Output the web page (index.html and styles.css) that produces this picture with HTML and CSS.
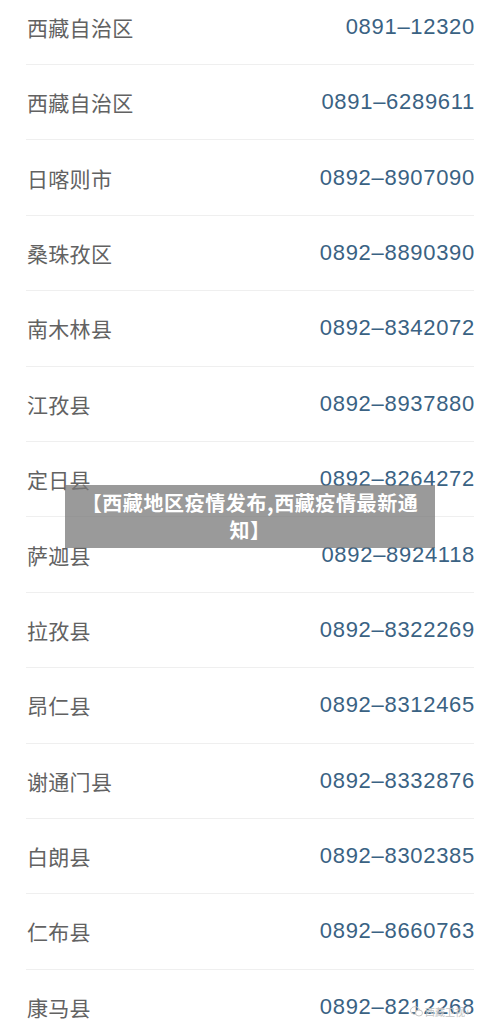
FILE: index.html
```html
<!DOCTYPE html>
<html lang="zh">
<head>
<meta charset="utf-8">
<link rel="stylesheet" href="styles.css">
</head>
<body>
<div class="page">
  <ul class="list">
    <li class="row"><span class="name">西藏自治区</span><span class="tel">0891–12320</span></li>
    <li class="row"><span class="name">西藏自治区</span><span class="tel">0891–6289611</span></li>
    <li class="row"><span class="name">日喀则市</span><span class="tel">0892–8907090</span></li>
    <li class="row"><span class="name">桑珠孜区</span><span class="tel">0892–8890390</span></li>
    <li class="row"><span class="name">南木林县</span><span class="tel">0892–8342072</span></li>
    <li class="row"><span class="name">江孜县</span><span class="tel">0892–8937880</span></li>
    <li class="row"><span class="name">定日县</span><span class="tel">0892–8264272</span></li>
    <li class="row"><span class="name">萨迦县</span><span class="tel">0892–8924118</span></li>
    <li class="row"><span class="name">拉孜县</span><span class="tel">0892–8322269</span></li>
    <li class="row"><span class="name">昂仁县</span><span class="tel">0892–8312465</span></li>
    <li class="row"><span class="name">谢通门县</span><span class="tel">0892–8332876</span></li>
    <li class="row"><span class="name">白朗县</span><span class="tel">0892–8302385</span></li>
    <li class="row"><span class="name">仁布县</span><span class="tel">0892–8660763</span></li>
    <li class="row"><span class="name">康马县</span><span class="tel">0892–8212268</span></li>
  </ul>
  <div class="title">【西藏地区疫情发布,西藏疫情最新通知】</div>
  <div class="mark">
    <svg width="13" height="11" viewBox="0 0 13 11"><ellipse cx="5" cy="4.5" rx="4.5" ry="3.8" fill="none" stroke="#c8c8c8" stroke-width="1"/><ellipse cx="9" cy="7" rx="3.5" ry="3" fill="#fff" stroke="#c8c8c8" stroke-width="1"/></svg>
    <span>西藏卫视+</span>
  </div>
</div>
</body>
</html>
```
FILE: styles.css
```css
html, body {
  margin: 0;
  padding: 0;
  background: #ffffff;
}
.page {
  position: relative;
  width: 500px;
  height: 1035px;
  overflow: hidden;
}
.list {
  list-style: none;
  margin: -10.4px 0 0 0;
  padding: 0 26px;
}
.row {
  height: 75.4px;
  box-sizing: border-box;
  display: flex;
  align-items: center;
  justify-content: space-between;
  border-bottom: 1.5px solid #efefef;
}
.name {
  font-family: "Noto Sans CJK SC", sans-serif;
  font-size: 21px;
  letter-spacing: 0.3px;
  color: #626262;
  padding-left: 1px;
}
.tel {
  font-family: "Liberation Sans", Arial, sans-serif;
  font-size: 22px;
  letter-spacing: 0.7px;
  color: #3a6283;
  margin-right: -1px;
}
.title {
  position: absolute;
  left: 65px;
  top: 485px;
  width: 370px;
  height: 63px;
  box-sizing: border-box;
  padding: 4px 10px;
  background: rgba(120, 120, 120, 0.75);
  color: #ffffff;
  font-family: "Noto Sans CJK SC", sans-serif;
  font-weight: 700;
  font-size: 20px;
  line-height: 27px;
  text-align: center;
  letter-spacing: 0.6px;
}
.mark {
  position: absolute;
  left: 410px;
  top: 1004px;
  display: flex;
  align-items: center;
  gap: 2px;
  font-family: "Noto Sans CJK SC", sans-serif;
  font-size: 10px;
  color: #c4c4c4;
}
```
